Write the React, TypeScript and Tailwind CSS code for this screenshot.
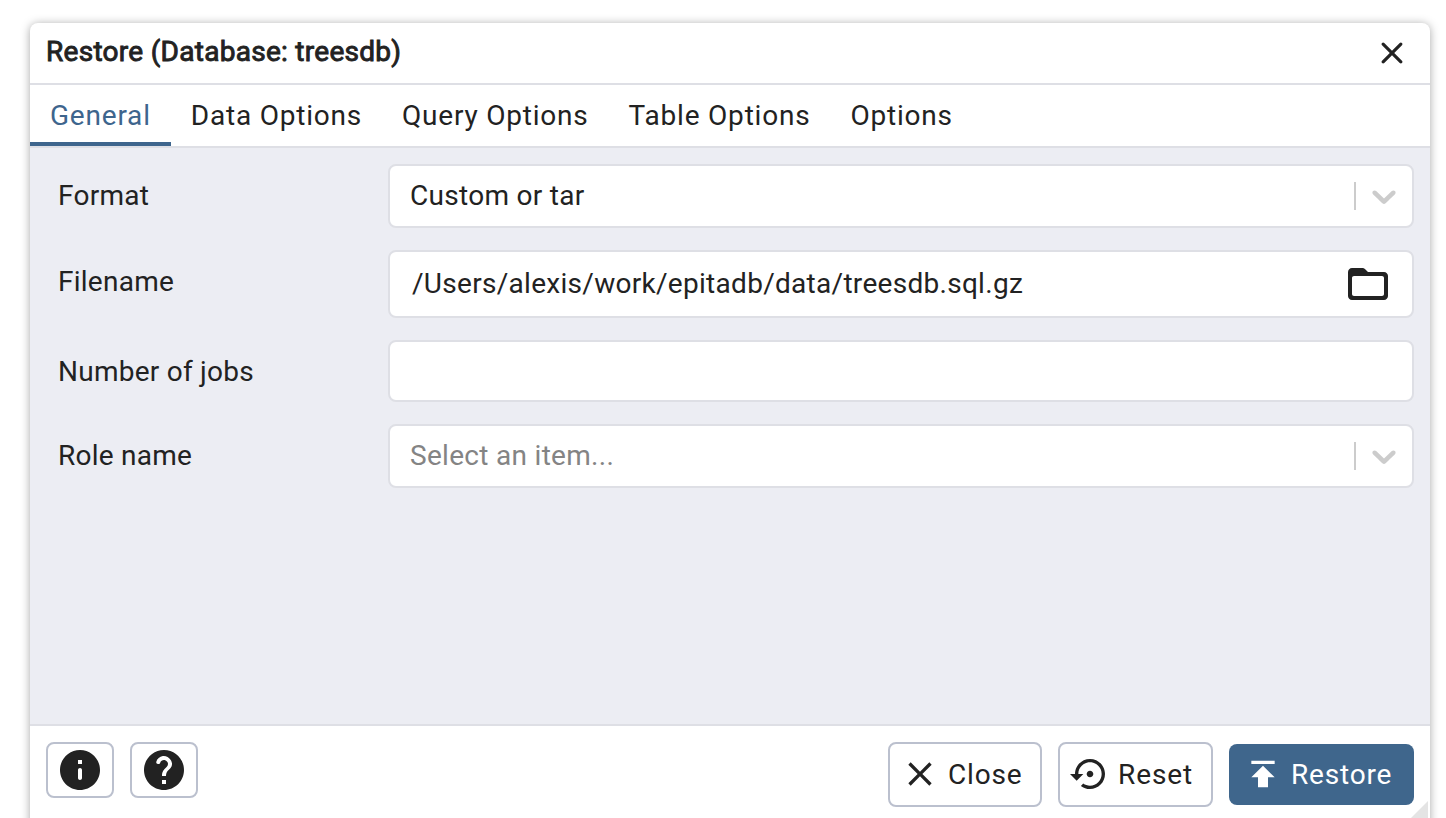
import type { ReactNode } from "react";

const PATHS = {
  closeRounded:
    "M18.3 5.71a.9959.9959 0 0 0-1.41 0L12 10.59 7.11 5.7a.9959.9959 0 0 0-1.41 0c-.39.39-.39 1.02 0 1.41L10.59 12 5.7 16.89c-.39.39-.39 1.02 0 1.41.39.39 1.02.39 1.41 0L12 13.41l4.89 4.89c.39.39 1.02.39 1.41 0 .39-.39.39-1.02 0-1.41L13.41 12l4.89-4.89c.38-.38.38-1.02 0-1.4z",
  close:
    "M19 6.41 17.59 5 12 10.59 6.41 5 5 6.41 10.59 12 5 17.59 6.41 19 12 13.41 17.59 19 19 17.59 13.41 12z",
  reset:
    "M14 12c0-1.1-.9-2-2-2s-2 .9-2 2 .9 2 2 2 2-.9 2-2zm-2-9c-4.97 0-9 4.03-9 9H0l4 4 4-4H5c0-3.87 3.13-7 7-7s7 3.13 7 7-3.13 7-7 7c-1.51 0-2.91-.49-4.06-1.3l-1.42 1.44C8.04 20.3 9.94 21 12 21c4.97 0 9-4.03 9-9s-4.03-9-9-9z",
  publish: "M5 4v2h14V4H5zm0 10h4v6h6v-6h4l-7-7-7 7z",
  folder:
    "M20 6h-8l-1.41-1.41C10.21 4.21 9.7 4 9.17 4H4c-1.1 0-1.99.9-1.99 2L2 18c0 1.1.9 2 2 2h16c1.1 0 2-.9 2-2V8c0-1.1-.9-2-2-2zm-1 12H5c-.55 0-1-.45-1-1V9c0-.55.45-1 1-1h14c.55 0 1 .45 1 1v8c0 .55-.45 1-1 1z",
  info:
    "M12 2C6.48 2 2 6.48 2 12s4.48 10 10 10 10-4.48 10-10S17.52 2 12 2zm0 15c-.55 0-1-.45-1-1v-4c0-.55.45-1 1-1s1 .45 1 1v4c0 .55-.45 1-1 1zm1-8h-2V7h2v2z",
  help:
    "M12 2C6.48 2 2 6.48 2 12s4.48 10 10 10 10-4.48 10-10S17.52 2 12 2zm1 17h-2v-2h2v2zm2.07-7.75-.9.92c-.5.51-.86.97-1.04 1.69-.08.32-.13.68-.13 1.14h-2v-.5c0-.46.08-.9.22-1.31.2-.58.53-1.1.95-1.52l1.24-1.26c.46-.44.68-1.1.55-1.8-.13-.72-.69-1.33-1.39-1.53-1.11-.31-2.14.32-2.47 1.27-.12.37-.43.65-.82.65h-.3C8.4 9 8 8.44 8.16 7.88c.43-1.47 1.68-2.59 3.23-2.83 1.52-.24 2.97.55 3.87 1.8 1.18 1.63.83 3.38-.19 4.4z",
};

function Icon({ name, className = "size-10" }: { name: keyof typeof PATHS; className?: string }) {
  return (
    <svg viewBox="0 0 24 24" fill="currentColor" className={`shrink-0 ${className}`} aria-hidden="true">
      <path d={PATHS[name]} />
    </svg>
  );
}

function SelectBox({ text, placeholder = false }: { text: string; placeholder?: boolean }) {
  return (
    <div className="flex h-16 w-full items-center rounded-lg border-2 border-[#dedfe5] bg-white pl-5">
      <span className={`flex-1 tracking-[0.3px] ${placeholder ? "text-[#848484]" : ""}`}>{text}</span>
      <span className="h-7 w-0.5 bg-[#cccccc]" />
      <svg viewBox="0 0 20 20" fill="#cccccc" className="mr-2 ml-2 size-10 shrink-0" aria-hidden="true">
        <path d="M4.516 7.548c0.436-0.446 1.043-0.481 1.576 0l3.908 3.747 3.908-3.747c0.533-0.481 1.141-0.446 1.574 0 0.436 0.445 0.408 1.197 0 1.615-0.406 0.418-4.695 4.502-4.695 4.502-0.217 0.223-0.502 0.335-0.787 0.335s-0.57-0.112-0.789-0.335c0 0-4.287-4.084-4.695-4.502s-0.436-1.17 0-1.615z" />
      </svg>
    </div>
  );
}

function Row({ label, children }: { label: string; children: ReactNode }) {
  return (
    <div className="flex items-start">
      <div className="w-[330px] shrink-0 pt-3 leading-10 tracking-[0.25px]">{label}</div>
      <div className="flex-1">{children}</div>
    </div>
  );
}

const TABS = ["General", "Data Options", "Query Options", "Table Options", "Options"];

export default function App() {
  return (
    <div className="h-[818px] overflow-hidden bg-white px-[30px] pt-[23px] pr-4 font-[Roboto,sans-serif] text-[28px] leading-10 text-[#222222]">
      <div className="relative flex h-[820px] w-[1400px] flex-col rounded-lg bg-white shadow-[0_1px_10px_rgba(0,0,0,0.35)]">
        <header className="flex h-[62px] shrink-0 items-center justify-between border-b-2 border-[#dedfe5] pr-[19px] pl-4">
          <h1 className="pb-0.5 font-normal tracking-[0.28px] [-webkit-text-stroke:0.9px_#222222]">Restore (Database: treesdb)</h1>
          <Icon name="closeRounded" className="size-[38px]" />
        </header>
        <nav className="flex h-[63px] shrink-0 border-b-2 border-[#dedfe5]">
          {TABS.map((tab, i) => (
            <div
              key={tab}
              className={`flex items-center border-b-4 px-5 pt-1 tracking-[0.79px] ${i === 0 ? "border-[#3e658d] text-[#3e658d]" : "border-transparent"}`}
            >
              {tab}
            </div>
          ))}
        </nav>
        <main className="flex h-[576px] shrink-0 flex-col gap-[22px] bg-[#ecedf3] pt-4 pr-4 pl-7">
          <Row label="Format">
            <SelectBox text="Custom or tar" />
          </Row>
          <Row label="Filename">
            <div className="flex h-[68px] items-center justify-between rounded-lg border-2 border-[#dedfe5] bg-white pr-5 pl-[22px]">
              <span className="tracking-[0.29px]">/Users/alexis/work/epitadb/data/treesdb.sql.gz</span>
              <Icon name="folder" className="size-12" />
            </div>
          </Row>
          <Row label="Number of jobs">
            <div className="h-[62px] rounded-lg border-2 border-[#dedfe5] bg-white" />
          </Row>
          <Row label="Role name">
            <SelectBox text="Select an item..." placeholder />
          </Row>
        </main>
        <footer className="flex flex-1 items-start gap-4 border-t-2 border-[#dedfe5] px-4 pt-4">
          <button className="flex h-14 w-[68px] items-center justify-center rounded-lg border-2 border-[#bbc0ce]">
            <Icon name="info" className="size-12" />
          </button>
          <button className="flex h-14 w-[68px] items-center justify-center rounded-lg border-2 border-[#bbc0ce]">
            <Icon name="help" className="size-12" />
          </button>
          <button className="ml-auto flex h-[65px] w-[154px] items-center gap-2 rounded-lg border-2 border-[#bbc0ce] pl-[10px] tracking-[0.8px]">
            <Icon name="close" className="mb-px size-10" />
            Close
          </button>
          <button className="flex h-[65px] w-[155px] items-center gap-2 rounded-lg border-2 border-[#bbc0ce] pl-[10px] tracking-[0.9px]">
            <Icon name="reset" className="mb-px size-10" />
            Reset
          </button>
          <button className="mt-0.5 flex h-[61px] w-[185px] items-center gap-2 rounded-lg bg-[#3f668c] pl-[14px] tracking-[0.8px] text-white">
            <Icon name="publish" className="mb-px size-10" />
            Restore
          </button>
        </footer>
        <span className="absolute right-0.5 bottom-[22px] size-[20px] bg-[#e4e4e4] [clip-path:polygon(100%_0,100%_100%,0_100%)]" />
      </div>
    </div>
  );
}
